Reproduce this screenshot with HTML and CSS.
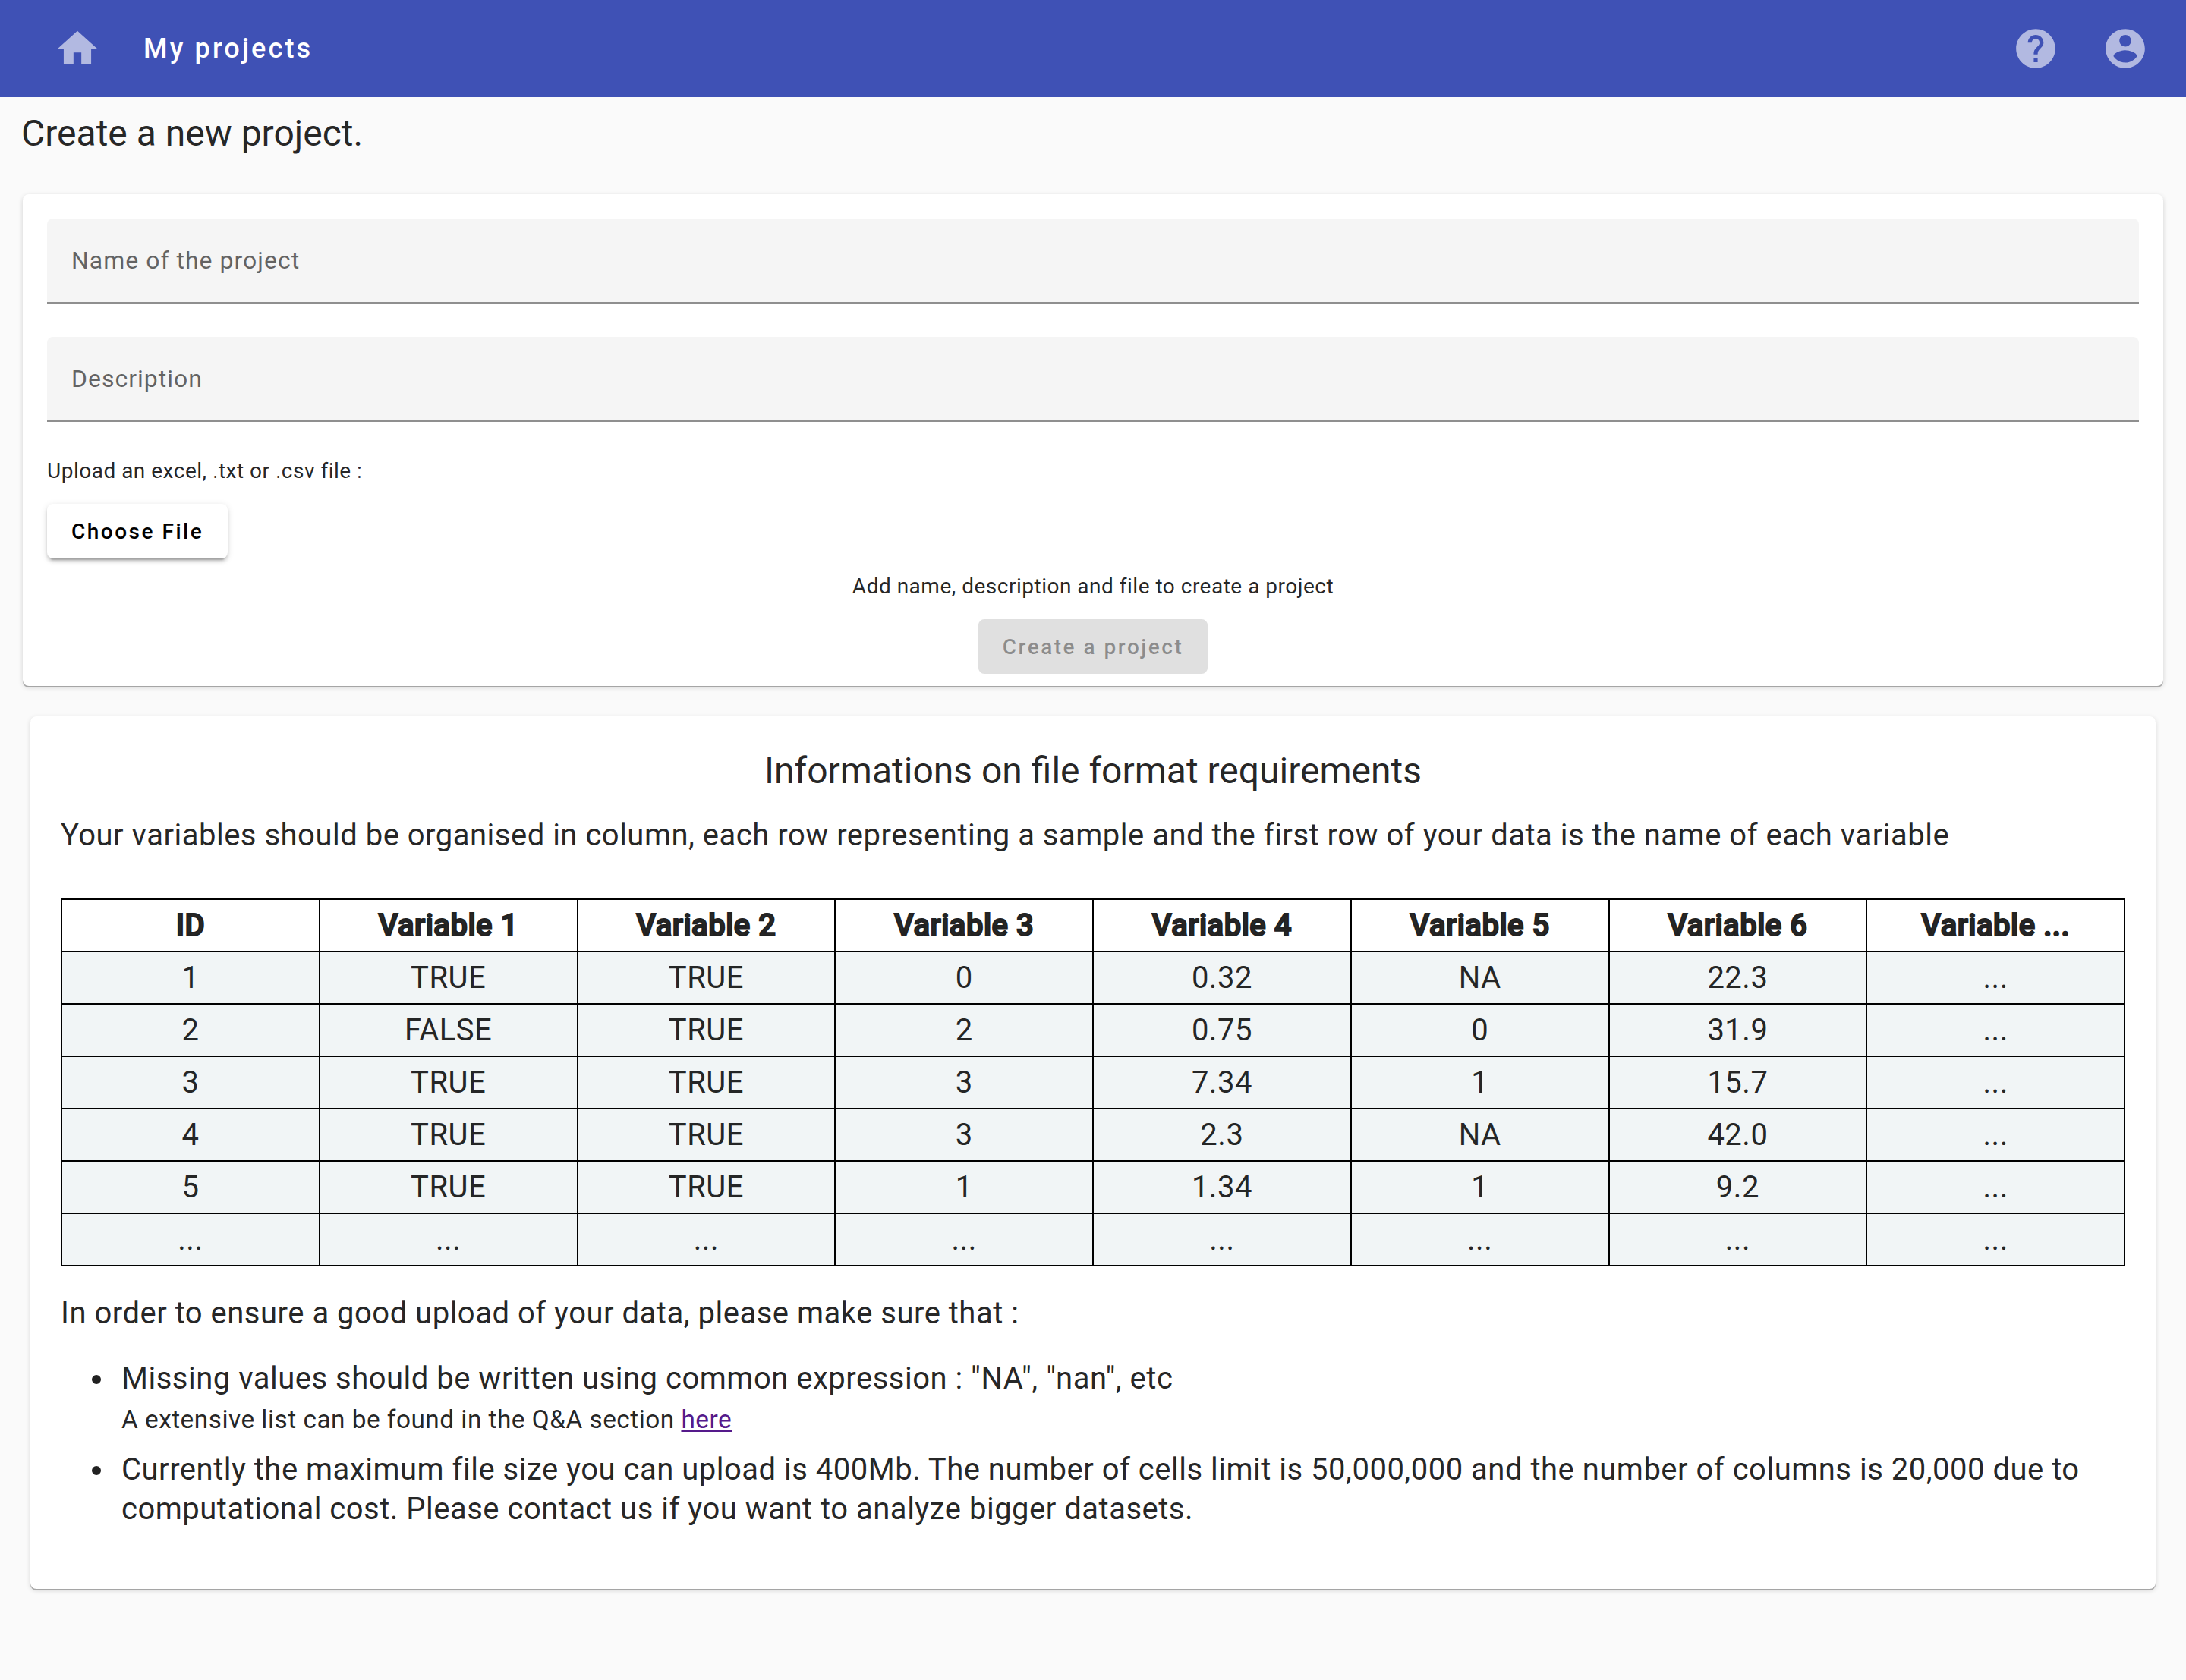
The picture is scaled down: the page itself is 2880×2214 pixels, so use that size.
FILE: index.html
```html
<!DOCTYPE html>
<html lang="en">
<head>
  <meta charset="utf-8">
  <meta name="viewport" content="width=device-width, initial-scale=1">
  <title>My projects</title>
  <link rel="stylesheet" href="styles.css">
</head>
<body>
  <header class="toolbar">
    <nav class="toolbar-nav">
      <a class="icon-link" href="#home" aria-label="Home">
        <svg class="icon" viewBox="0 0 24 24" aria-hidden="true"><path d="M10 20v-6h4v6h5v-8h3L12 3 2 12h3v8z"/></svg>
      </a>
      <a class="nav-link" href="#projects">My projects</a>
    </nav>
    <div class="toolbar-actions">
      <a class="icon-link" href="#help" aria-label="Help">
        <svg class="icon" viewBox="0 0 24 24" aria-hidden="true"><path d="M12 2C6.480 2 2 6.480 2 12s4.480 10 10 10 10-4.480 10-10S17.520 2 12 2zm1 17h-2v-2h2v2zm2.070-7.750l-.9.920C13.450 12.900 13 13.500 13 15h-2v-.5c0-1.100.450-2.100 1.170-2.830l1.240-1.260c.370-.360.590-.860.590-1.410 0-1.100-.9-2-2-2s-2 .9-2 2H8c0-2.210 1.790-4 4-4s4 1.790 4 4c0 .880-.360 1.680-.930 2.250z"/></svg>
      </a>
      <a class="icon-link" href="#account" aria-label="Account">
        <svg class="icon" viewBox="0 0 24 24" aria-hidden="true"><path d="M12 2C6.480 2 2 6.480 2 12s4.480 10 10 10 10-4.480 10-10S17.520 2 12 2zm0 3c1.660 0 3 1.340 3 3s-1.340 3-3 3-3-1.340-3-3 1.340-3 3-3zm0 14.200c-2.500 0-4.710-1.280-6-3.220.03-1.990 4-3.080 6-3.080 1.990 0 5.970 1.090 6 3.080-1.290 1.940-3.500 3.220-6 3.220z"/></svg>
      </a>
    </div>
  </header>

  <main class="page">
    <h1 class="title page-title">Create a new project.</h1>

    <form class="card project-form">
      <div class="field">
        <input class="field-input" type="text" id="name" placeholder="Name of the project" aria-label="Name of the project">
      </div>
      <div class="field">
        <input class="field-input" type="text" id="description" placeholder="Description" aria-label="Description">
      </div>
      <p class="form-text">Upload an excel, .txt or .csv file :</p>
      <button class="button button-raised" type="button">Choose File</button>
      <div class="submit">
        <p class="form-text">Add name, description and file to create a project</p>
        <button class="button" type="submit" disabled>Create a project</button>
      </div>
    </form>

    <section class="card info">
      <h2 class="title info-title">Informations on file format requirements</h2>
      <p class="info-text">Your variables should be organised in column, each row representing a sample and the first row of your data is the name of each variable</p>
      <table class="example">
        <thead>
          <tr><th>ID</th><th>Variable 1</th><th>Variable 2</th><th>Variable 3</th><th>Variable 4</th><th>Variable 5</th><th>Variable 6</th><th>Variable ...</th></tr>
        </thead>
        <tbody>
          <tr><td>1</td><td>TRUE</td><td>TRUE</td><td>0</td><td>0.32</td><td>NA</td><td>22.3</td><td>...</td></tr>
          <tr><td>2</td><td>FALSE</td><td>TRUE</td><td>2</td><td>0.75</td><td>0</td><td>31.9</td><td>...</td></tr>
          <tr><td>3</td><td>TRUE</td><td>TRUE</td><td>3</td><td>7.34</td><td>1</td><td>15.7</td><td>...</td></tr>
          <tr><td>4</td><td>TRUE</td><td>TRUE</td><td>3</td><td>2.3</td><td>NA</td><td>42.0</td><td>...</td></tr>
          <tr><td>5</td><td>TRUE</td><td>TRUE</td><td>1</td><td>1.34</td><td>1</td><td>9.2</td><td>...</td></tr>
          <tr><td>...</td><td>...</td><td>...</td><td>...</td><td>...</td><td>...</td><td>...</td><td>...</td></tr>
        </tbody>
      </table>
      <p class="info-text">In order to ensure a good upload of your data, please make sure that :</p>
      <ul class="rules">
        <li>Missing values should be written using common expression : "NA", "nan", etc
          <div class="rule-note">A extensive list can be found in the Q&amp;A section <a class="note-link" href="#qa">here</a></div>
        </li>
        <li>Currently the maximum file size you can upload is 400Mb. The number of cells limit is 50,000,000 and the number of columns is 20,000 due to computational cost. Please contact us if you want to analyze bigger datasets.</li>
      </ul>
    </section>
  </main>
</body>
</html>
```
FILE: styles.css
```css
* {
  box-sizing: border-box;
}

body {
  margin: 0;
  background: #fafafa;
  color: rgba(0, 0, 0, 0.87);
  font-family: Roboto, "Liberation Sans", sans-serif;
  font-size: 28px;
  line-height: 42px;
}

.toolbar {
  display: flex;
  align-items: center;
  justify-content: space-between;
  height: 128px;
  padding: 0 49px 0 71px;
  background: #3f51b5;
}

.toolbar-nav,
.toolbar-actions {
  display: flex;
  align-items: center;
  gap: 56px;
}

.icon-link {
  display: flex;
  color: rgba(255, 255, 255, 0.6);
}

.icon {
  width: 62px;
  height: 62px;
  fill: currentColor;
}

.nav-link {
  color: #fff;
  font-size: 36px;
  font-weight: 500;
  letter-spacing: 0.0875em;
  text-decoration: none;
}

.title {
  margin: 0;
  font-size: 48px;
  font-weight: 400;
  line-height: 64px;
}

.page {
  padding-bottom: 120px;
}

.page-title {
  padding: 16px 28px 48px;
}

.card {
  background: #fff;
  border-radius: 8px;
  box-shadow:
    0 2px 0 0 rgba(0, 0, 0, 0.26),
    0 2px 6px 0 rgba(0, 0, 0, 0.16);
}

.project-form {
  margin: 0 30px 40px;
  padding: 32px 32px 16px;
}

.field {
  margin-bottom: 44px;
}

.field-input {
  display: block;
  width: 100%;
  height: 112px;
  padding: 0 32px;
  border: 0;
  border-bottom: 2px solid #8f8f8f;
  border-radius: 8px 8px 0 0;
  background: #f5f5f5;
  color: rgba(0, 0, 0, 0.87);
  font: inherit;
  font-size: 32px;
  letter-spacing: 1px;
}

.field-input::placeholder {
  color: rgba(0, 0, 0, 0.6);
}

.form-text {
  margin: 0 0 22px;
  letter-spacing: 0.0179em;
}

.button {
  height: 72px;
  padding: 2px 32px 0;
  border: 0;
  border-radius: 8px;
  background: #e0e0e0;
  color: #000;
  font: inherit;
  font-weight: 500;
  letter-spacing: 0.0893em;
}

.button:disabled {
  color: rgba(0, 0, 0, 0.38);
}

.button-raised {
  background: #fff;
  box-shadow:
    0 6px 2px -4px rgba(0, 0, 0, 0.2),
    0 4px 4px 0 rgba(0, 0, 0, 0.14),
    0 2px 10px 0 rgba(0, 0, 0, 0.12);
}

.submit {
  display: flex;
  flex-direction: column;
  align-items: center;
  padding-top: 16px;
}

.info {
  margin: 0 40px;
  padding: 40px 40px 67px;
  font-size: 40px;
  line-height: 52px;
  letter-spacing: 0.0125em;
}

.info-title {
  margin-bottom: 27px;
  text-align: center;
  letter-spacing: normal;
}

.info-text {
  margin: 0;
}

.example {
  width: 100%;
  margin: 57px 0 36px;
  border-collapse: collapse;
  table-layout: fixed;
  line-height: 47px;
  text-align: center;
}

.example th,
.example td {
  padding: 10px;
  border: 2px solid #000;
}

.example th {
  font-weight: 500;
  -webkit-text-stroke: 2px #212121;
}

.example td {
  background: #f1f5f6;
}

.rules {
  margin: 34px 0 0;
  padding-left: 72px;
}

.rules li {
  margin-bottom: 12px;
  padding-left: 8px;
}

.rule-note {
  font-size: smaller;
  line-height: 56px;
}

.note-link {
  color: #551a8b;
}
```
